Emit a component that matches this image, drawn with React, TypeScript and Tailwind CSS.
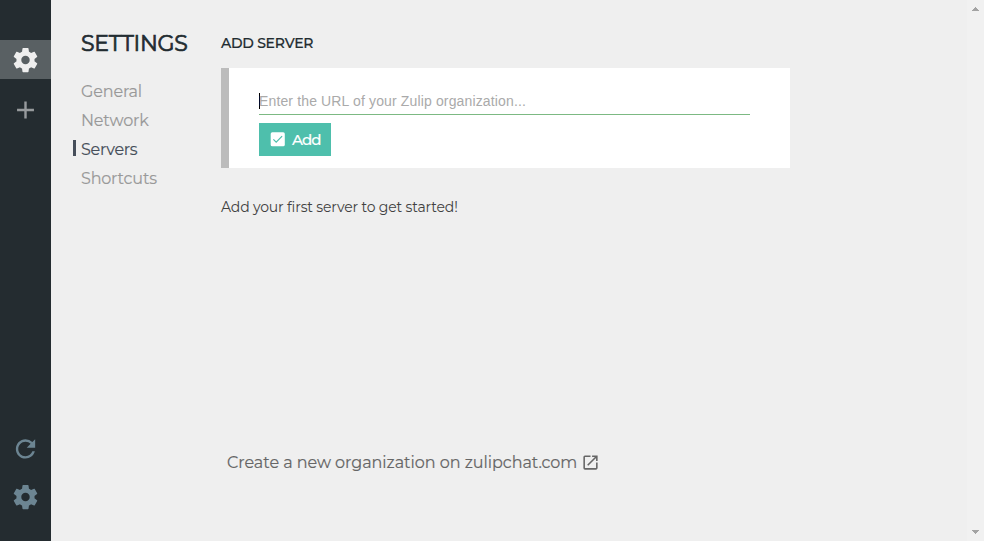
import { MdAdd, MdOpenInNew, MdRefresh } from "react-icons/md";

const GearIcon = () => (
  <svg viewBox="0 0.35 24 24" className="size-[29px] overflow-visible" fill="currentColor">
    <path d="M19.43 12.98c.04-.32.07-.64.07-.98s-.03-.66-.07-.98l2.11-1.65c.19-.15.24-.42.12-.64l-2-3.46c-.12-.22-.39-.3-.61-.22l-2.49 1c-.52-.4-1.08-.73-1.69-.98l-.38-2.65C14.46 2.18 14.25 2 14 2h-4c-.25 0-.46.18-.49.42l-.38 2.65c-.61.25-1.17.59-1.69.98l-2.49-1c-.23-.09-.49 0-.61.22l-2 3.46c-.13.22-.07.49.12.64l2.11 1.65c-.04.32-.07.65-.07.98s.03.66.07.98l-2.11 1.65c-.19.15-.24.42-.12.64l2 3.46c.12.22.39.3.61.22l2.49-1c.52.4 1.08.73 1.69.98l.38 2.65c.03.24.24.42.49.42h4c.25 0 .46-.18.49-.42l.38-2.65c.61-.25 1.17-.59 1.69-.98l2.49 1c.23.09.49 0 .61-.22l2-3.46c.12-.22.07-.49-.12-.64l-2.11-1.65zM12 15.5c-1.93 0-3.5-1.57-3.5-3.5s1.57-3.5 3.5-3.5 3.5 1.57 3.5 3.5-1.57 3.5-3.5 3.5z" />
  </svg>
);

const CheckBoxIcon = () => (
  <svg viewBox="0 0 15 15" className="mb-px size-[15px]">
    <rect x="0.7" y="0.3" width="14.1" height="14" rx="1.6" fill="white" />
    <path d="M3.4 7.4l2.8 2.7 5.9-5.9" fill="none" stroke="#4ebfac" strokeWidth="1.2" />
  </svg>
);

const navItems = [
  { label: "General", spacing: "tracking-[-0.15px]" },
  { label: "Network", spacing: "tracking-[-0.15px]" },
  { label: "Servers", spacing: "tracking-[-0.3px]", active: true },
  { label: "Shortcuts", spacing: "tracking-[-0.2px]" },
];

export default function App() {
  return (
    <div className="flex h-[541px] w-[984px] overflow-hidden bg-[#efefef] font-['Montserrat','Inter',sans-serif] whitespace-nowrap">
      <aside className="flex w-[51px] shrink-0 flex-col bg-[#242c30] pt-10 pb-[29px]">
        <div className="flex h-[39px] items-center justify-center bg-[#596063] pt-px text-[#efefef]">
          <GearIcon />
        </div>
        <div className="mt-[17px] flex justify-center text-[#979b9d]">
          <MdAdd viewBox="0 0.4 24 24" className="size-[29px]" />
        </div>
        <div className="mt-auto flex flex-col items-center gap-[19px] text-[#6c8592]">
          <MdRefresh viewBox="0 0.5 24 24" className="size-[29px]" />
          <GearIcon />
        </div>
      </aside>

      <nav className="w-[170px] shrink-0 pt-[30px] pl-[22px]">
        <h1 className="pl-2 text-[22px] leading-7 font-normal tracking-[-0.28px] text-[#222c31] [-webkit-text-stroke:0.7px]">
          SETTINGS
        </h1>
        <ul className="mt-[19px] text-base [-webkit-text-stroke:0.15px]">
          {navItems.map((item) => (
            <li key={item.label} className="flex h-[29px] items-center">
              <span className={item.active ? "mb-[3px] h-4 w-[3px] bg-[#464e5a]" : "h-4 w-[3px]"} />
              <span className={`ml-[5px] ${item.spacing} ${item.active ? "text-[#464e5a]" : "text-[#999]"}`}>
                {item.label}
              </span>
            </li>
          ))}
        </ul>
      </nav>

      <main className="flex-1 pt-8">
        <h2 className="h-[22px] text-sm leading-[22px] font-medium text-[#222c31]">
          <span className="tracking-[-0.25px] [-webkit-text-stroke:0.2px]">ADD SERVER</span>
        </h2>
        <section className="mt-[14px] h-[100px] w-[569px] border-l-8 border-[#bcbcbc] bg-white pt-5 pl-[30px]">
          <div className="flex h-[27px] w-[491px] items-center border-b border-[#7cb983] font-['Liberation_Sans',Arial,sans-serif] text-sm text-[#aaa]">
            <span className="h-4 w-px bg-black" />
            <span className="-ml-px tracking-[0.14px]">Enter the URL of your Zulip organization...</span>
          </div>
          <button className="mt-2 flex h-[33px] w-[72px] items-center bg-[#4ebfac] pl-[11px] text-white">
            <CheckBoxIcon />
            <span className="ml-[7px] text-[15px] leading-[22px] font-medium tracking-[-1px] [-webkit-text-stroke:0.15px]">
              Add
            </span>
          </button>
        </section>
        <p className="mt-7 h-[22px] text-sm leading-[22px] text-[#414141]">
          <span className="tracking-[-0.16px]">Add your first server to get started!</span>
        </p>
        <a className="mt-[233px] flex h-6 items-center pl-1.5 text-base text-[#666]">
          <span className="tracking-[-0.045px] [-webkit-text-stroke:0.15px]">
            Create a new organization on zulipchat.com
          </span>
          <MdOpenInNew className="mb-[2px] ml-1 size-[19px]" />
        </a>
      </main>

      <div className="flex w-[17px] shrink-0 flex-col items-center justify-between bg-[#f1f1f1] py-[7px] text-[#a3a3a3]">
        <svg className="h-1 w-[7px]" viewBox="0 0 7 4" shapeRendering="crispEdges" fill="currentColor">
          <path d="M3 0h1v1h1v1h1v1h1v1H0V3h1V2h1V1h1z" />
        </svg>
        <svg className="h-1 w-[7px]" viewBox="0 0 7 4" shapeRendering="crispEdges" fill="currentColor">
          <path d="M0 0h7v1H6v1H5v1H4v1H3V3H2V2H1V1H0z" />
        </svg>
      </div>
    </div>
  );
}
